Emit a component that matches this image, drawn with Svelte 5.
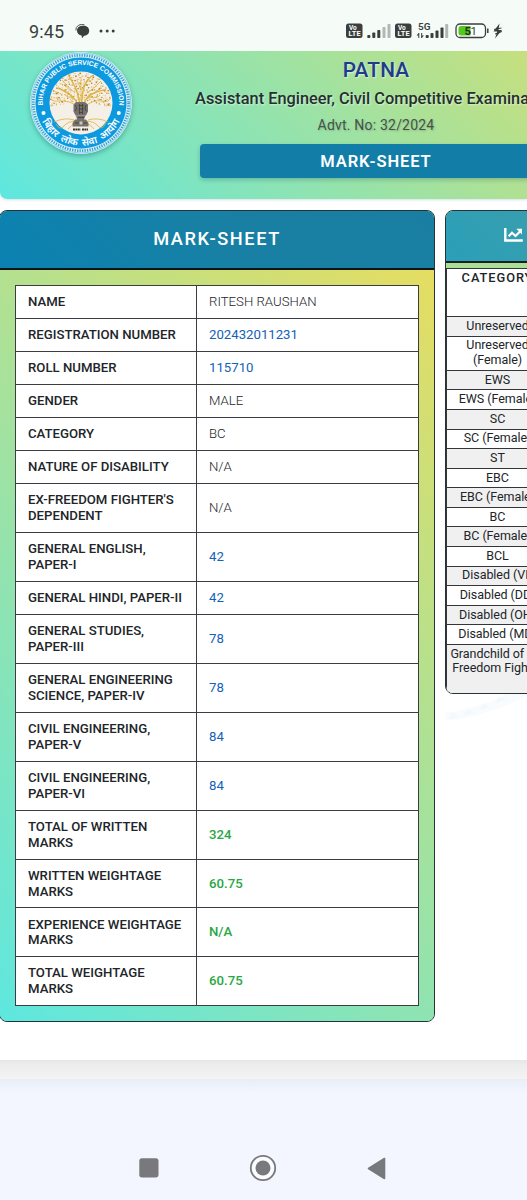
<script lang="ts">
    type Row = {
        label: string;
        value: string;
        kind?: string;
    };

    const rows: Row[] = [
        { label: "NAME", value: "RITESH RAUSHAN" },
        { label: "REGISTRATION NUMBER", value: "202432011231", kind: "number" },
        { label: "ROLL NUMBER", value: "115710", kind: "number" },
        { label: "GENDER", value: "MALE" },
        { label: "CATEGORY", value: "BC" },
        { label: "NATURE OF DISABILITY", value: "N/A" },
        { label: "EX-FREEDOM FIGHTER'S\nDEPENDENT", value: "N/A" },
        { label: "GENERAL ENGLISH,\nPAPER-I", value: "42", kind: "number" },
        { label: "GENERAL HINDI, PAPER-II", value: "42", kind: "number" },
        { label: "GENERAL STUDIES,\nPAPER-III", value: "78", kind: "number" },
        { label: "GENERAL ENGINEERING\nSCIENCE, PAPER-IV", value: "78", kind: "number" },
        { label: "CIVIL ENGINEERING,\nPAPER-V", value: "84", kind: "number" },
        { label: "CIVIL ENGINEERING,\nPAPER-VI", value: "84", kind: "number" },
        { label: "TOTAL OF WRITTEN\nMARKS", value: "324", kind: "total" },
        { label: "WRITTEN WEIGHTAGE\nMARKS", value: "60.75", kind: "total" },
        { label: "EXPERIENCE WEIGHTAGE\nMARKS", value: "N/A", kind: "total" },
        { label: "TOTAL WEIGHTAGE\nMARKS", value: "60.75", kind: "total" },
    ];

    const categories = [
        "Unreserved",
        "Unreserved\n(Female)",
        "EWS",
        "EWS (Female)",
        "SC",
        "SC (Female)",
        "ST",
        "EBC",
        "EBC (Female)",
        "BC",
        "BC (Female)",
        "BCL",
        "Disabled (VI)",
        "Disabled (DD)",
        "Disabled (OH)",
        "Disabled (MD)",
        "Grandchild of the\nFreedom Fighter",
    ];

    // leaves of the emblem tree, spread over the upper part of the disc
    const leaves = Array.from({ length: 520 }, (_, i) => {
        const angle = i * 2.39996 + Math.sin(i * 5.3) * 0.05;
        const radius = 30.5 * Math.sqrt((i + 0.5) / 520);
        return {
            x: 51 + radius * Math.cos(angle) + Math.sin(i * 12.9) * 0.8,
            y: 51 + radius * Math.sin(angle) + Math.cos(i * 7.7) * 0.8,
            r: 0.45 + ((i * 7) % 5) * 0.11,
            fill: ["#cf9535", "#e0b660", "#bd8429", "#e6c98a"][(i * 3) % 4],
        };
    }).filter((leaf) => leaf.y < 47 + Math.abs(leaf.x - 51) * 0.3);
</script>

<div class="screen">
    <div class="status">
        <span class="time">9:45</span>
        <svg class="chat" width="15" height="15" viewBox="0 0 15 15">
            <path d="M.9 6.500A6 5.500 0 0 1 9.500.9" fill="none" stroke="#3a3f3d" stroke-width=".9" />
            <path d="M8 1.700c3.900 0 6.200 1.900 6.200 5s-2.300 4.900-5.100 5L7 14.200l-.4-2.600C4 11.100 2 9.400 2 6.700c0-3.100 2.300-5 6-5z" fill="#3a3f3d" />
        </svg>
        <svg class="dots" width="17" height="4" viewBox="0 0 17 4">
            <circle cx="2" cy="2" r="1.500" />
            <circle cx="8.200" cy="2" r="1.500" />
            <circle cx="14.200" cy="2" r="1.500" />
        </svg>
        <svg class="indicators" width="157" height="20" viewBox="0 0 157 20">
            {#each [0, 49] as x}
                <g transform="translate({x} 0)">
                    <rect x="0" y="2.500" width="16.500" height="14.500" rx="2.500" fill="#3a3f3d" />
                    <text x="3" y="8.800" font-size="6.500" font-weight="700" fill="#fff">Vo</text>
                    <text x="2.600" y="15.300" font-size="6.800" font-weight="700" textLength="12" lengthAdjust="spacingAndGlyphs" fill="#fff">LTE</text>
                </g>
            {/each}
            <g fill="#3a3f3d">
                <rect x="21.300" y="14" width="3" height="3" rx=".8" />
                <rect x="26.300" y="11.500" width="3" height="5.500" rx=".8" />
                <rect x="31.300" y="9" width="3" height="8" rx=".8" />
                <rect x="36.500" y="6" width="3" height="11" rx=".8" fill="#b2b7b5" />
                <rect x="41.500" y="3" width="3" height="14" rx=".8" fill="#b2b7b5" />
                <text x="72" y="9" font-size="9.500" font-weight="600" textLength="12.500" lengthAdjust="spacingAndGlyphs">5G</text>
                <path d="M72.800 12v5M75.700 12v5" stroke="#3a3f3d" stroke-width="1" fill="none" />
                <path d="M70.500 14.600l2.300-2.700V14.600zM78 14.400l-2.300 2.700V14.400z" />
                <rect x="79.700" y="14" width="3" height="3" rx=".8" />
                <rect x="84.500" y="12" width="3" height="5" rx=".8" />
                <rect x="89.500" y="9.500" width="3" height="7.500" rx=".8" />
                <rect x="94.500" y="6.500" width="3" height="10.500" rx=".8" />
                <rect x="99.200" y="3" width="3" height="14" rx=".8" fill="#b2b7b5" />
            </g>
            <rect x="110" y="3" width="29.500" height="13.500" rx="4" fill="#fafffc" stroke="#3a3f3d" stroke-width="1.300" />
            <path d="M115 5h9.500v9.500H115a2.500 2.500 0 0 1-2.500-2.500V7.500A2.500 2.500 0 0 1 115 5z" fill="#55c81e" />
            <path d="M141.800 7.500v4.500" stroke="#3a3f3d" stroke-width="1.500" />
            <text x="118.500" y="14" font-size="11.500" font-weight="700" fill="#22301f">5</text>
            <text x="124.500" y="14" font-size="11.500" font-weight="400" fill="#3a3f3d">1</text>
            <path d="M153.500 2.500l-6 8h3.700l-2.200 7 7-8.500h-3.500z" fill="#3a3f3d" />
            <path d="M148 8.500l7.500-1.500M149 13l7-2.500" stroke="#3a3f3d" stroke-width="1" />
        </svg>
    </div>

    <div class="page">
        <div class="header">
            <svg class="emblem" width="102" height="102" viewBox="0 0 102 102">
                <defs>
                    <path id="arc-top" d="M13.300 57.800a38.300 38.300 0 1 1 75.400 0" />
                    <path id="arc-bottom" d="M8.200 51a42.800 42.800 0 0 0 85.600 0" />
                </defs>
                <circle cx="51" cy="51" r="51" fill="#d8f2f7" />
                <circle cx="51" cy="51" r="50" fill="none" stroke="#5cb3de" stroke-width=".6" />
                <circle cx="51" cy="51" r="47.700" fill="none" stroke="#3a9fd4" stroke-width="2.800" stroke-dasharray="1.300 1.200" />
                <circle cx="51" cy="51" r="45.500" fill="#0c99e0" />
                <circle cx="51" cy="51" r="31.500" fill="#f4f0e8" />
                {#each leaves as leaf}
                    <circle cx={leaf.x} cy={leaf.y} r={leaf.r} fill={leaf.fill} />
                {/each}
                <g class="branches">
                    <path d="M49 57Q47 47 39 42T28 36M53 57Q54 45 64 41T76 38M50 56Q49 41 43 31T39 23M52 56Q51 39 56 31T63 24" stroke-width="1.400" />
                    <path d="M48 55Q40 48 29 49T22 44M54 55Q64 47 72 49T80 45M51 50V25M45 41Q38 35 32 28M57 41Q67 34 71 29M45 44Q38 47 34 42M57 45Q68 47 70 43M51 38L47 28M52 37L58 27" />
                    <path d="M47 69Q38 69 34 74T26 72M55 69Q64 69 68 74T76 71M47 71Q42 72 38 77M55 71Q61 72 64 77M44 68Q35 65 24 70M58 68Q68 65 78 70" />
                </g>
                <g fill="#77716c">
                    <path d="M46 50h9l3 2.500v7l-2 4H45.500l-2-4v-7z" />
                    <path d="M46 63.500h9.500l-1.500 4h2l2.500 3.500v3.500h-16V71l2.500-3.500h2z" />
                </g>
                <path d="M45.500 53q2 3 0 6M56 53q-2 3 0 6M48.500 53.500h5M48.500 57h5M49 60.500h4M49.500 52v10M52.500 52v10M45 71h12M48 65.500h6" stroke="#3f3c3b" stroke-width=".8" fill="none" />
                <circle cx="51" cy="71" r="1.800" fill="#c8c3bd" />
                <path d="M43 77.500h7.500M52 77.500h6" stroke="#3d3429" stroke-width="1.900" stroke-dasharray="2 .4" />
                <g fill="#fff">
                    <circle cx="13.500" cy="61" r="2" />
                    <circle cx="88.800" cy="61" r="2" />
                    <text class="ring-en"><textPath href="#arc-top" startOffset="50%" text-anchor="middle">BIHAR PUBLIC SERVICE COMMISSION</textPath></text>
                    <text class="ring-hi"><textPath href="#arc-bottom" startOffset="50%" text-anchor="middle">बिहार लोक सेवा आयोग</textPath></text>
                </g>
            </svg>
            <div class="titles">
                <div class="city">PATNA</div>
                <div class="exam">Assistant Engineer, Civil Competitive Examination</div>
                <div class="advt">Advt. No: 32/2024</div>
                <div class="banner">MARK-SHEET</div>
            </div>
        </div>

        <div class="cards">
            <div class="card marks">
                <div class="card-title">MARK-SHEET</div>
                <div class="card-body">
                    <div class="table">
                        {#each rows as row}
                            <div class="row">
                                <div class="label">{row.label}</div>
                                <div class="value {row.kind ?? ''}">{row.value}</div>
                            </div>
                        {/each}
                    </div>
                </div>
            </div>

            <div class="side">
                <div class="card cutoff">
                    <div class="cutoff-title">
                        <svg width="20" height="16" viewBox="0 0 20 16">
                            <path d="M1.300 1v12.500h17.500" fill="none" stroke="#fff" stroke-width="2.400" />
                            <path d="M4.700 9.300l3.300-3.600 3.500 3.300 4.500-4.500" fill="none" stroke="#fff" stroke-width="2.200" />
                            <path d="M12.300 1.700h5.700v5.700z" fill="#fff" />
                        </svg>
                    </div>
                    <div class="column">
                        <div class="cat head">CATEGORY</div>
                        {#each categories as category}
                            <div class="cat">{category}</div>
                        {/each}
                    </div>
                </div>
                <svg class="watermark" width="84" height="32" viewBox="0 0 84 32">
                    <path d="M0 19Q40 12 62 0h22Q46 22 0 27z" fill="#f9fcfe" />
                    <path d="M3 25l5-7 5 6zM18 22l5-7 6 4zM34 17l4-8 7 4zM50 10l3-7 8 2z" fill="#f3f8fc" />
                </svg>
            </div>
        </div>
        <div class="page-end"></div>
    </div>

    <div class="nav">
        <svg width="20" height="20" viewBox="0 0 20 20"><rect x=".3" y=".3" width="19.200" height="19.200" rx="2.700" fill="#77797c" /></svg>
        <svg width="28" height="28" viewBox="0 0 28 28">
            <circle cx="14" cy="14" r="12.200" fill="#fafcff" stroke="#77797c" stroke-width="1.800" />
            <circle cx="14" cy="14" r="7.500" fill="#77797c" />
        </svg>
        <svg width="19" height="23" viewBox="0 0 19 23"><path d="M17.500 1.500v20L1.500 11.500z" fill="#77797c" stroke="#77797c" stroke-width="1.600" stroke-linejoin="round" /></svg>
    </div>
</div>

<style>
    :global(body) {
        margin: 0;
    }

    .screen {
        width: 527px;
        height: 1200px;
        display: flex;
        flex-direction: column;
        overflow: hidden;
        background: #fff;
        font-family: Roboto, "Noto Sans", sans-serif;
        color: #212529;
    }

    .status {
        height: 51px;
        flex: none;
        display: flex;
        align-items: center;
        box-sizing: border-box;
        padding: 11px 24px 0 29px;
        background: #f5fcf8;
    }

    .time {
        width: 37px;
        font-size: 18px;
        letter-spacing: 0.1px;
        color: #3a3f3d;
    }

    .chat {
        margin-left: 9px;
    }

    .dots {
        margin-left: 9px;
        fill: #3a3f3d;
    }

    .indicators {
        margin-left: auto;
    }

    .page {
        height: 1028px;
        flex: none;
        display: flex;
        flex-direction: column;
        overflow: hidden;
    }

    .header {
        height: 148px;
        flex: none;
        display: flex;
        align-items: flex-start;
        box-sizing: border-box;
        padding-left: 30px;
        border-radius: 0 0 0 7px;
        background: linear-gradient(45deg, #5ee7df 0, #e5dd61 620px);
        box-shadow: 0 1px 3px rgba(80, 140, 160, 0.25);
    }

    .emblem {
        flex: none;
        margin-top: 1px;
        border-radius: 50%;
        box-shadow: 0 2px 5px rgba(0, 70, 70, 0.35);
    }

    .branches {
        fill: none;
        stroke: #dfb23c;
        stroke-width: 0.8;
    }

    .ring-en {
        font: 700 6.7px "Liberation Sans", sans-serif;
    }

    .ring-hi {
        font: 600 10px "Noto Sans", "Noto Sans Devanagari", sans-serif;
        word-spacing: 2.5px;
    }

    .titles {
        width: 352px;
        flex: none;
        display: flex;
        flex-direction: column;
        align-items: center;
        margin-left: 68px;
        white-space: nowrap;
        text-shadow: 1px 1px 2px rgba(255, 255, 255, 0.6);
    }

    .city {
        padding-top: 6px;
        font-size: 20.8px;
        font-weight: 500;
        line-height: 26px;
        letter-spacing: 0.2px;
        color: #223a8c;
    }

    .exam {
        margin-top: 5px;
        font-size: 16.35px;
        font-weight: 500;
        line-height: 22px;
        color: #25302c;
    }

    .advt {
        margin-top: 5px;
        font-size: 14px;
        line-height: 20px;
        letter-spacing: 0.2px;
        color: #46524c;
        text-shadow: 1px 1px 2px rgba(70, 90, 80, 0.3);
    }

    .banner {
        width: 100%;
        height: 34px;
        margin-top: 9px;
        border-radius: 4px;
        background: #127ea8;
        box-shadow: 0 2px 4px rgba(0, 60, 80, 0.25);
        color: #fff;
        font-size: 16.5px;
        font-weight: 600;
        line-height: 35px;
        letter-spacing: 0.9px;
        text-align: center;
        text-shadow: none;
    }

    .cards {
        display: flex;
        align-items: flex-start;
        margin: 11px 0 0 -1px;
    }

    .card {
        box-sizing: border-box;
        overflow: hidden;
        border: 1px solid #26343a;
        border-radius: 8px;
    }

    .marks {
        width: 436px;
        height: 812px;
        flex: none;
        background: #8fe3b3;
    }

    .card-title {
        height: 57px;
        border-bottom: 2px solid #101418;
        background: linear-gradient(45deg, #0a82b2, #1880a4 50%, #197ea2);
        color: #fff;
        font-size: 18.2px;
        font-weight: 500;
        line-height: 56.5px;
        letter-spacing: 1.55px;
        text-align: center;
    }

    .card-body {
        height: 751px;
        box-sizing: border-box;
        padding: 15px 15px 0 15px;
        background: linear-gradient(45deg, #5ee7df, #e5dd61);
    }

    .table {
        border: 1px solid #3b3d42;
        border-bottom: 0;
        background: #fff;
    }

    .row {
        display: flex;
        border-bottom: 1px solid #3b3d42;
        font-size: 13.2px;
        line-height: 15.9px;
    }

    .label {
        width: 181px;
        box-sizing: border-box;
        padding: 8.05px 0 8.065px 12px;
        border-right: 1px solid #3b3d42;
        font-weight: 500;
        white-space: pre;
    }

    .value {
        display: flex;
        align-items: center;
        padding-left: 12px;
        font-weight: 300;
    }

    .value.number {
        color: #1461b8;
        font-weight: 400;
    }

    .value.total {
        color: #28a745;
        font-weight: 500;
    }

    .side {
        width: 330px;
        flex: none;
        margin-left: 10px;
    }

    .cutoff {
        height: 484px;
        background: #abdf95;
    }

    .watermark {
        display: block;
    }

    .cutoff-title {
        height: 50px;
        display: flex;
        align-items: center;
        padding-left: 57.5px;
        border-bottom: 2px solid #182024;
        background: linear-gradient(45deg, #2aa0b9, #3b9dab 120px);
    }

    .cutoff-title svg {
        margin-bottom: 2px;
    }

    .column {
        width: 101px;
        height: 426px;
        margin-top: 5px;
        border-top: 1px solid #34363a;
        border-left: 1px solid #34363a;
        background: #fff;
    }

    .cat {
        display: grid;
        align-items: center;
        box-sizing: border-box;
        padding: 1.9px 0;
        border-bottom: 1px solid #34363a;
        font-size: 12.5px;
        line-height: 14.78px;
        letter-spacing: -0.05px;
        text-align: center;
        white-space: pre;
    }

    .cat:nth-child(even) {
        background: #f0f0f1;
    }

    .cat.head {
        height: 48px;
        align-items: start;
        font-size: 12.8px;
        font-weight: 500;
        letter-spacing: 0.95px;
    }

    .cat:last-child {
        height: 50px;
        align-items: start;
        border-bottom: 0;
    }

    .page-end {
        height: 20px;
        flex: none;
        margin-top: 38px;
        background: linear-gradient(#e6e6e6, #ececec 20%, #f4f4f5);
    }

    .nav {
        flex: 1;
        display: flex;
        align-items: center;
        box-sizing: border-box;
        padding: 57px 0 0 139px;
        background: linear-gradient(#e8edf7, #f3f6ff 14px);
    }

    .nav svg + svg {
        margin-left: 90px;
    }
</style>
